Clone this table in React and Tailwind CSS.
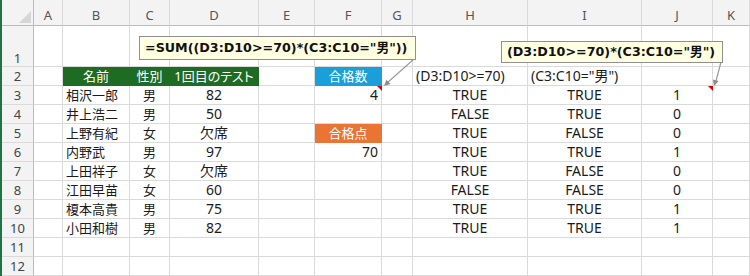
import React from 'react';

const COLS = ['A', 'B', 'C', 'D', 'E', 'F', 'G', 'H', 'I', 'J', 'K'];

const people = [
  ['相沢一郎', '男', '82', 'TRUE', 'TRUE', '1'],
  ['井上浩二', '男', '50', 'FALSE', 'TRUE', '0'],
  ['上野有紀', '女', '欠席', 'TRUE', 'FALSE', '0'],
  ['内野武', '男', '97', 'TRUE', 'TRUE', '1'],
  ['上田祥子', '女', '欠席', 'TRUE', 'FALSE', '0'],
  ['江田早苗', '女', '60', 'FALSE', 'FALSE', '0'],
  ['榎本高貴', '男', '75', 'TRUE', 'TRUE', '1'],
  ['小田和樹', '男', '82', 'TRUE', 'TRUE', '1'],
];

// what sits in column F, keyed by row number
const colF = {
  3: { text: '4', a: 'right' },
  5: { text: '合格点', fill: 'orange' },
  6: { text: '70', a: 'right' },
};

const align = {
  left: 'justify-start pl-[3px]',
  center: 'justify-center',
  right: 'justify-end pr-[3px]',
};

const fills = {
  green: 'bg-[#1e6b24] border-[#1e6b24] text-white',
  blue: 'bg-[#1b9fd8] border-[#1b9fd8] text-white',
  orange: 'bg-[#ea7433] border-[#ea7433] text-white',
};

function Cell({ children, a = 'center', fill, className = '' }) {
  const look = fill ? fills[fill] : 'border-[#dadada] text-[#1b1b1b]';
  return (
    <div className={`flex items-center whitespace-nowrap border-r border-b ${look} ${align[a]} ${className}`}>
      {children}
    </div>
  );
}

function RowHead({ n, bottom }) {
  return (
    <div className={`flex justify-center bg-[#f3f3f3] border-r border-r-[#bcbcbc] border-b border-b-[#dadada] text-[13px] text-[#444] ${bottom ? 'items-end pb-px' : 'items-center'}`}>
      {n}
    </div>
  );
}

function Callout({ className, children }) {
  return (
    <div className={`absolute flex items-center px-[5px] bg-[#ffffe1] border border-[#8f8f8f] whitespace-nowrap font-['DejaVu_Sans','Noto_Sans_CJK_JP',sans-serif] font-bold text-[12.7px] text-[#111] ${className}`}>
      {children}
    </div>
  );
}

export default function App() {
  return (
    <div className="relative flex w-[750px] h-[276px] overflow-hidden bg-white font-['Noto_Sans','Noto_Sans_CJK_JP',sans-serif] text-[14px] leading-none">
      <div className="w-[2px] shrink-0 bg-[#217346]" />

      <div className="grid flex-1 grid-cols-[32px_29px_67px_40px_89px_56px_67px_31px_115px_114px_71px_1fr] grid-rows-[26px_41px_repeat(11,19px)]">
        {/* column header strip */}
        <div className="relative bg-[#f3f3f3] border-r border-r-[#bcbcbc] border-b border-b-[#bcbcbc]">
          <svg className="absolute right-[2px] bottom-[2px]" width="12" height="12" viewBox="0 0 12 12">
            <polygon points="12,0 12,12 0,12" fill="#d6d6d6" />
          </svg>
        </div>
        {COLS.map(c => (
          <div key={c} className="flex items-center justify-center pt-[5px] bg-[#f3f3f3] border-r border-r-[#dadada] border-b border-b-[#bcbcbc] text-[13px] text-[#555]">
            {c}
          </div>
        ))}

        {/* row 1 */}
        <RowHead n={1} bottom />
        {COLS.map(c => <Cell key={c} />)}

        {/* row 2 */}
        <RowHead n={2} />
        <Cell />
        <Cell fill="green" className="text-[13px]">名前</Cell>
        <Cell fill="green" className="text-[13px]">性別</Cell>
        <Cell fill="green" className="text-[13px] [font-feature-settings:'palt']">1回目のテスト</Cell>
        <Cell />
        <Cell fill="blue" className="text-[13px]">合格数</Cell>
        <Cell />
        <Cell a="left">(D3:D10&gt;=70)</Cell>
        <Cell a="left">(C3:C10="男")</Cell>
        <Cell />
        <Cell />

        {/* rows 3-10 */}
        {people.map(([name, sex, score, h, i, j], idx) => {
          const n = idx + 3;
          const f = colF[n];
          return (
            <React.Fragment key={n}>
              <RowHead n={n} />
              <Cell />
              <Cell a="left" className="text-[13px]">{name}</Cell>
              <Cell className="text-[13px]">{sex}</Cell>
              <Cell>{score}</Cell>
              <Cell />
              {f ? <Cell a={f.a} fill={f.fill} className={f.fill ? 'text-[13px]' : ''}>{f.text}</Cell> : <Cell />}
              <Cell />
              <Cell>{h}</Cell>
              <Cell>{i}</Cell>
              <Cell>{j}</Cell>
              <Cell />
            </React.Fragment>
          );
        })}

        {/* empty rows */}
        {[11, 12].map(n => (
          <React.Fragment key={n}>
            <RowHead n={n} />
            {COLS.map(c => <Cell key={c} />)}
          </React.Fragment>
        ))}
      </div>

      {/* comment markers and leader arrows */}
      <svg className="absolute inset-0 pointer-events-none" width="750" height="276">
        <polygon points="377,86 382,86 382,91" fill="#e00000" />
        <polygon points="708,86 713,86 713,91" fill="#e00000" />
        <line x1="414" y1="59" x2="387" y2="83" stroke="#9a9a9a" strokeWidth="1.2" />
        <polygon points="384,86 390.4,84.1 386.4,79.7" fill="#8c8c8c" />
        <line x1="721" y1="62" x2="716" y2="81" stroke="#9a9a9a" strokeWidth="1.2" />
        <polygon points="714,86 718.6,81.1 712.9,79.4" fill="#8c8c8c" />
      </svg>

      <Callout className="left-[139px] top-[36px] w-[277px] h-[24px]">=SUM((D3:D10&gt;=70)*(C3:C10="男"))</Callout>
      <Callout className="left-[501px] top-[41px] w-[222px] h-[22px]">(D3:D10&gt;=70)*(C3:C10="男")</Callout>
    </div>
  );
}
